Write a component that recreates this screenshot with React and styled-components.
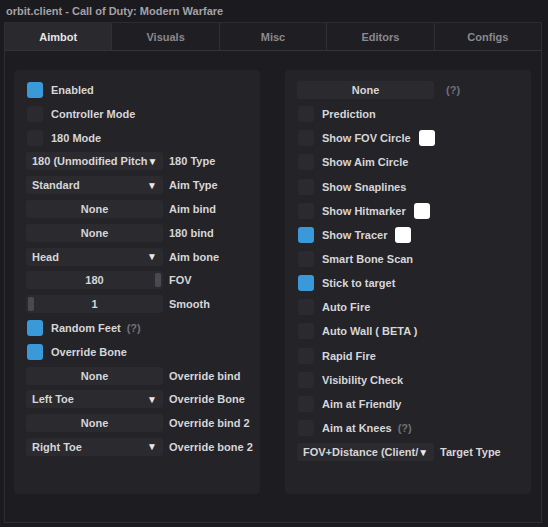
import React from 'react'
import styled, { createGlobalStyle } from 'styled-components'

const Global = createGlobalStyle`
  html, body {
    margin: 0;
    padding: 0;
    background: #1b1a1f;
  }
  body {
    font-family: "Liberation Sans", Arial, sans-serif;
    font-weight: bold;
    font-size: 11px;
    color: #d6d6d8;
  }
`;

const Page = styled.div`
  width: 548px;
  height: 527px;
  display: flex;
  flex-flow: column;
  background: #1b1a1f;
  overflow: hidden;
`;

const Title = styled.div`
  height: 22px;
  line-height: 22px;
  padding-left: 6px;
  color: #a3a2a8;
  font-size: 11px;
`;

const Frame = styled.div`
  margin: 0 6px 0 4px;
  height: 499px;
  border: 1px solid #2f2e33;
  border-top: 1px solid #2c2b30;
  background: #1d1c21;
  display: flex;
  flex-flow: column;
`;

const Tabs = styled.div`
  display: flex;
  height: 27px;
  border-bottom: 1px solid #34333a;
`;

const Tab = styled.div`
  flex: 1;
  display: flex;
  align-items: center;
  justify-content: center;
  background: ${p => (p.active ? '#2a292e' : '#1f1e23')};
  color: ${p => (p.active ? '#e6e6e6' : '#8a898f')};
  border-right: 1px solid #302f35;
  &:last-child {
    border-right: none;
  }
`;

const Body = styled.div`
  display: flex;
  gap: 25px;
  padding: 19px 9px 0 9px;
`;

const Panel = styled.div`
  width: 246px;
  height: 424px;
  box-sizing: border-box;
  background: #242328;
  border-radius: 4px;
  padding: 11px 12px;
  display: flex;
  flex-flow: column;
  gap: ${p => p.gap}px;
`;

const Row = styled.div`
  display: flex;
  align-items: center;
  height: 18px;
`;

const Check = styled.div`
  width: 16px;
  height: 16px;
  border-radius: 3px;
  margin: 0 8px 0 1px;
  background: ${p => (p.on ? '#3a9ad9' : '#2b2a2f')};
`;

const Label = styled.span`
  color: #d6d6d8;
  white-space: nowrap;
`;

const Hint = styled.span`
  color: #717076;
  margin-left: 6px;
  font-size: 11px;
`;

const Swatch = styled.div`
  width: 16px;
  height: 16px;
  border-radius: 3px;
  background: #ffffff;
  margin-left: 8px;
`;

const Box = styled.div`
  width: 137px;
  height: 18px;
  box-sizing: border-box;
  border-radius: 3px;
  background: #2b2a2f;
  display: flex;
  align-items: center;
  position: relative;
  margin-right: 6px;
  flex-shrink: 0;
  white-space: nowrap;
  overflow: hidden;
`;

const Combo = styled(Box)`
  padding: 0 6px 0 6px;
  justify-content: space-between;
`;

const Arrow = styled.span`
  font-size: 10px;
  color: #e8e8e8;
`;

const Button = styled(Box)`
  justify-content: center;
`;

const Grab = styled.div`
  position: absolute;
  top: 2px;
  ${p => (p.right ? 'right: 2px;' : 'left: 2px;')}
  width: 6px;
  height: 14px;
  border-radius: 2px;
  background: #4a494f;
`;

const CheckRow = ({ on, label, hint, swatch }) => (
  <Row>
    <Check on={on} />
    <Label>{label}</Label>
    {hint && <Hint>(?)</Hint>}
    {swatch && <Swatch />}
  </Row>
)

const ComboRow = ({ value, label }) => (
  <Row>
    <Combo>
      <span>{value}</span>
      <Arrow>▼</Arrow>
    </Combo>
    <Label>{label}</Label>
  </Row>
)

const ButtonRow = ({ value, label, hint }) => (
  <Row>
    <Button>{value}</Button>
    {label && <Label>{label}</Label>}
    {hint && <Hint>(?)</Hint>}
  </Row>
)

const SliderRow = ({ value, label, right }) => (
  <Row>
    <Button>
      {value}
      <Grab right={right} />
    </Button>
    <Label>{label}</Label>
  </Row>
)

const tabs = ['Aimbot', 'Visuals', 'Misc', 'Editors', 'Configs']

export default function App() {
  return (
    <Page>
      <Global />
      <Title>orbit.client - Call of Duty: Modern Warfare</Title>
      <Frame>
        <Tabs>
          {tabs.map((t, i) => (
            <Tab key={t} active={i === 0}>{t}</Tab>
          ))}
        </Tabs>
        <Body>
          <Panel gap={5.8}>
            <CheckRow on label="Enabled" />
            <CheckRow label="Controller Mode" />
            <CheckRow label="180 Mode" />
            <ComboRow value="180 (Unmodified Pitch" label="180 Type" />
            <ComboRow value="Standard" label="Aim Type" />
            <ButtonRow value="None" label="Aim bind" />
            <ButtonRow value="None" label="180 bind" />
            <ComboRow value="Head" label="Aim bone" />
            <SliderRow value="180" label="FOV" right />
            <SliderRow value="1" label="Smooth" />
            <CheckRow on label="Random Feet" hint />
            <CheckRow on label="Override Bone" />
            <ButtonRow value="None" label="Override bind" />
            <ComboRow value="Left Toe" label="Override Bone" />
            <ButtonRow value="None" label="Override bind 2" />
            <ComboRow value="Right Toe" label="Override bone 2" />
          </Panel>
          <Panel gap={6.15}>
            <ButtonRow value="None" hint />
            <CheckRow label="Prediction" />
            <CheckRow label="Show FOV Circle" swatch />
            <CheckRow label="Show Aim Circle" />
            <CheckRow label="Show Snaplines" />
            <CheckRow label="Show Hitmarker" swatch />
            <CheckRow on label="Show Tracer" swatch />
            <CheckRow label="Smart Bone Scan" />
            <CheckRow on label="Stick to target" />
            <CheckRow label="Auto Fire" />
            <CheckRow label="Auto Wall ( BETA )" />
            <CheckRow label="Rapid Fire" />
            <CheckRow label="Visibility Check" />
            <CheckRow label="Aim at Friendly" />
            <CheckRow label="Aim at Knees" hint />
            <ComboRow value="FOV+Distance (Client/" label="Target Type" />
          </Panel>
        </Body>
      </Frame>
    </Page>
  )
}
